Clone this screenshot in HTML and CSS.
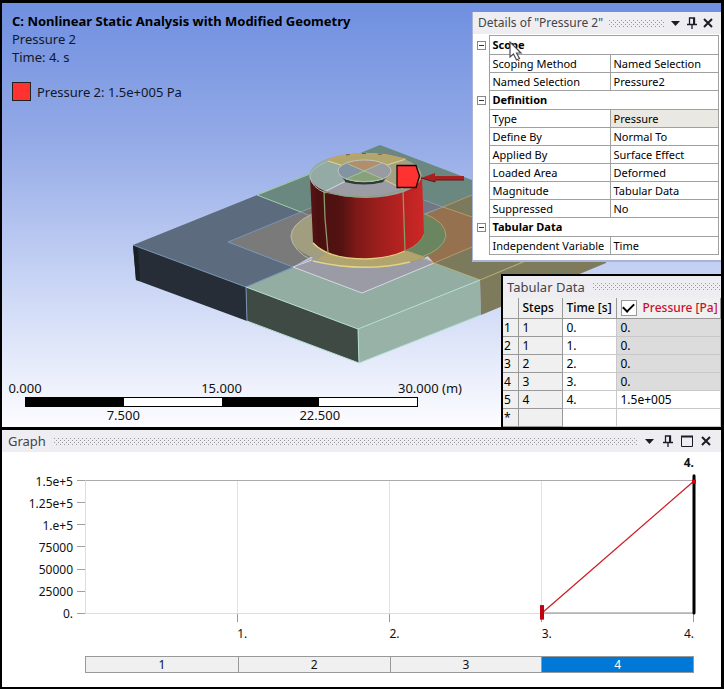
FILE: index.html
```html
<!DOCTYPE html>
<html lang="en">
<head>
<meta charset="utf-8">
<title>Nonlinear Static Analysis</title>
<link rel="stylesheet" href="styles.css">
</head>
<body>
<main class="app">
  <section class="viewport">
    <svg class="scene" viewBox="2 3 719 424" preserveAspectRatio="xMinYMin slice" aria-hidden="true">
      <defs>
        <linearGradient id="wall" x1="0" x2="1" y1="0" y2="0">
          <stop offset="0" stop-color="#5a1413"/><stop offset=".07" stop-color="#4a1010"/><stop offset=".28" stop-color="#551212"/>
          <stop offset=".4" stop-color="#7c1917"/><stop offset=".6" stop-color="#9c1f1d"/><stop offset=".8" stop-color="#b72220"/><stop offset="1" stop-color="#cc2827"/>
        </linearGradient>
        <clipPath id="ring"><ellipse cx="368.500" cy="236" rx="78" ry="31"/></clipPath>
        <clipPath id="top"><ellipse cx="365.500" cy="175.500" rx="56" ry="22.500"/></clipPath>
        <clipPath id="hub"><ellipse cx="364.500" cy="171" rx="26.500" ry="11"/></clipPath>
      </defs>
      <!-- plate: top face -->
      <path fill="#6b8880" d="M257 195 380 145 472 180 520 198 443 207 301 212Z"/>
      <path fill="#5c6c7e" d="M133 245 257 195 310 215 228 242 293 267 246 287Z"/>
      <path fill="#7b7a5c" d="M443 207 472 195 520 195 606 229 480 280 434 263Z"/>
      <path fill="#93ada3" d="M246 287 293 267 362 293 434 263 480 280 358 329Z"/>
      <path fill="#7b7a7b" d="M228 242 301 212 322 204 340 240 293 267Z"/>
      <path fill="#9b9ba6" d="M293 267 330 250 400 250 434 263 362 293Z"/>
      <path fill="#957150" d="M434 263 400 225 443 207 520 235 472 247Z"/>
      <path fill="#727783" d="M410 196 424 200 443 207 410 220Z"/>
      <path fill="#75736f" d="M301 212 322 204 322 219Z"/>
      <!-- plate: side faces -->
      <path fill="#262d36" d="M133 245 246 287 247 321 136 280Z"/>
      <path fill="#1a2126" d="M133 245 138 247 140 281 136 280Z"/>
      <path fill="#404a45" d="M246 287 358 329 359 363 247 321Z"/>
      <path fill="#98b2a8" d="M358 329 480 280 481 315 359 363Z"/>
      <path fill="#7e7b5d" d="M480 280 606 229 606 263 481 315Z"/>
      <!-- ring on the plate -->
      <g clip-path="url(#ring)">
        <path fill="#a19e80" d="M280 200H370V280H280Z"/>
        <path fill="#6a855f" d="M370 200H460V280H370Z"/>
        <path fill="#b1a46e" d="M300 268 328 253 405 250 440 262 420 280H300Z"/>
      </g>
      <g fill="none" stroke-width="1">
        <path stroke="#7793b4" d="M133 245 246 287 303 263M246 287 247 321M301 212 228 242 293 267"/>
        <path stroke="#9bd0a0" d="M257 195 301 212M257 195 310 174"/>
        <path stroke="#8b9ba5" d="M301 212 318 205M301 212 313 217M424 200 443 207 424 214"/>
        <path stroke="#b5e0d0" d="M246 287 358 329 480 280M358 329 359 363 247 321M359 363 481 315"/>
        <path stroke="#d5d6df" d="M293 267 362 293 434 263M293 267 312 260"/>
        <path stroke="#ba9868" d="M443 207 472 195M443 207 472 217M421 257 434 263 472 247"/>
        <path stroke="#b2ae70" d="M434 263 480 280 525 261"/>
        <path stroke="#b8b7a8" d="M312 214Q291 224 291 237 293 251 313 261"/>
        <path stroke="#e2d681" stroke-width="1.500" d="M313 261Q364 273 410 262"/>
        <path stroke="#b89b64" d="M425 214Q446 222 446 236 443 250 421 257M421 257 410 252"/>
      </g>
      <!-- cylinder -->
      <path fill="url(#wall)" d="M310 176 313 242Q328 259 366 259 410 258 424 235L422 176Z"/>
      <path fill="none" stroke="#e3d27f" stroke-width="1.300" d="M313 243Q328 259 366 259 390 258 405 251"/>
      <path fill="none" stroke="#79986a" d="M405 251Q421 244 424 234"/>
      <path fill="none" stroke="#8b9b69" stroke-width="1.300" d="M324 191 325 218 328 253M403 189 405 251"/>
      <g clip-path="url(#top)">
        <path fill="#9c9ca5" d="M300 150H430V200H300Z"/>
        <path fill="#94aaa5" d="M300 145 328 161 365 173 324 192 300 195Z"/>
        <path fill="#b1a66e" d="M328 161 310 145H420L406 159 365 173Z"/>
        <path fill="#a4a183" d="M406 159 430 150V195L403 189 365 173Z"/>
        <path fill="none" stroke="#e0d990" d="M328 161 347 167M406 159 384 166"/>
        <path fill="none" stroke="#d9dadd" d="M324 192 346 181"/>
        <path fill="none" stroke="#d5cf97" d="M403 189 383 179"/>
      </g>
      <path fill="none" stroke="#acbdb6" d="M310 178Q309 169 328 161M310 177Q312 188 326 193"/>
      <path fill="none" stroke="#d0a064" d="M328 160Q364 147 406 159"/>
      <path fill="none" stroke="#8ba174" d="M324 192Q364 203 403 190"/>
      <path stroke="#5c6455" stroke-dasharray="4 12" d="M346 155Q364 152 386 155" fill="none"/>
      <!-- raised hub -->
      <path fill="#39453f" d="M338 172 345 181Q364 186 383 182L391 171 383 176H345Z"/>
      <g clip-path="url(#hub)">
        <path fill="#999aa2" d="M330 155H395V185H330Z"/>
        <path fill="#8293a2" d="M335 155 348 164 364 171 346 179 335 185Z"/>
        <path fill="#b28e6c" d="M348 164 340 155H390L382 163 364 171Z"/>
        <path fill="#87a17b" d="M364 171 346 179 340 188H390L383 179Z"/>
      </g>
      <ellipse cx="364.500" cy="171" rx="26.500" ry="11" fill="none" stroke="#bdc7c4"/>
      <path fill="none" stroke="#2f3b34" stroke-width="2" d="M345 181Q364 186 383 181"/>
      <path fill="none" stroke="#a5c397" d="M348 164 383 179M382 163 346 179Q364 184 383 179"/>
      <!-- load tag and direction arrow -->
      <path fill="#a92020" d="M464 176V180H435V182L421 178 435 173V176Z"/>
      <path stroke="#641819" fill="none" d="M421 178 435 182V180H464"/>
      <path fill="#ff3232" stroke="#160505" stroke-width="1.300" d="M397 165.500H416L419.500 176 416 187.500H397Z"/>
    </svg>

    <div class="caption">
      <h1>C: Nonlinear Static Analysis with Modified Geometry</h1>
      <p>Pressure 2</p>
      <p>Time: 4. s</p>
      <p class="legend"><span class="swatch"></span>Pressure 2: 1.5e+005 Pa</p>
    </div>

    <div class="scale">
      <div class="scale-top"><span>0.000</span><span>15.000</span><span class="scale-end">30.000 (m)</span></div>
      <div class="scale-bar"><i></i><i></i><i></i><i></i></div>
      <div class="scale-bottom"><span>7.500</span><span>22.500</span></div>
    </div>

    <section class="details">
      <header class="bar">
        <h2>Details of "Pressure 2"</h2><span class="grip"></span>
        <button aria-label="Menu"><svg width="10" height="12" viewBox="0 0 10 12"><path d="M0 4H9L4.500 9Z" fill="#1c1c28"/></svg></button>
        <button aria-label="Pin"><svg width="10" height="12" viewBox="0 0 10 12"><path d="M2.500 7V1H7.500V7M0 7.500H10M5 8V12" fill="none" stroke="#1c1c28" stroke-width="1.300"/><path d="M6 1H8V7H6Z" fill="#1c1c28"/></svg></button>
        <button aria-label="Close"><svg width="10" height="12" viewBox="0 0 10 12"><path d="M1 2 9 10M9 2 1 10" stroke="#1c1c28" stroke-width="2"/></svg></button>
      </header>
      <table class="props">
        <colgroup><col class="c-gutter"><col class="c-name"><col></colgroup>
        <tr class="group"><td><button aria-label="Collapse Scope"></button></td><th colspan="2">Scope</th></tr>
        <tr><td></td><td>Scoping Method</td><td>Named Selection</td></tr>
        <tr><td></td><td>Named Selection</td><td>Pressure2</td></tr>
        <tr class="group"><td><button aria-label="Collapse Definition"></button></td><th colspan="2">Definition</th></tr>
        <tr><td></td><td>Type</td><td class="locked">Pressure</td></tr>
        <tr><td></td><td>Define By</td><td>Normal To</td></tr>
        <tr><td></td><td>Applied By</td><td>Surface Effect</td></tr>
        <tr><td></td><td>Loaded Area</td><td>Deformed</td></tr>
        <tr><td></td><td>Magnitude</td><td>Tabular Data</td></tr>
        <tr><td></td><td>Suppressed</td><td>No</td></tr>
        <tr class="group"><td><button aria-label="Collapse Tabular Data"></button></td><th colspan="2">Tabular Data</th></tr>
        <tr><td></td><td>Independent Variable</td><td>Time</td></tr>
      </table>
      <svg class="cursor" width="14" height="20" viewBox="0 0 14 20" aria-hidden="true"><path d="M1 1V16L4.500 13 7.500 19 10.500 17.500 7.500 12H12Z" fill="#fff" stroke="#4a4a55" stroke-width="1.200"/></svg>
    </section>

    <section class="tabular">
      <header class="bar"><h2>Tabular Data</h2><span class="grip"></span></header>
      <table class="data">
        <colgroup><col class="d-num"><col class="d-step"><col class="d-time"><col></colgroup>
        <tr><th></th><th>Steps</th><th>Time [s]</th><th class="series"><label><input type="checkbox" checked>Pressure [Pa]</label></th></tr>
        <tr><td>1</td><td>1</td><td>0.</td><td class="off">0.</td></tr>
        <tr><td>2</td><td>1</td><td>1.</td><td class="off">0.</td></tr>
        <tr><td>3</td><td>2</td><td>2.</td><td class="off">0.</td></tr>
        <tr><td>4</td><td>3</td><td>3.</td><td class="off">0.</td></tr>
        <tr><td>5</td><td>4</td><td>4.</td><td>1.5e+005</td></tr>
        <tr><td>*</td><td></td><td></td><td></td></tr>
      </table>
    </section>
  </section>

  <section class="graph">
    <header class="bar">
      <h2>Graph</h2><span class="grip"></span>
      <button aria-label="Menu"><svg width="10" height="12" viewBox="0 0 10 12"><path d="M0 4H9L4.500 9Z" fill="#1c1c28"/></svg></button>
      <button aria-label="Pin"><svg width="10" height="12" viewBox="0 0 10 12"><path d="M2.500 7V1H7.500V7M0 7.500H10M5 8V12" fill="none" stroke="#1c1c28" stroke-width="1.300"/><path d="M6 1H8V7H6Z" fill="#1c1c28"/></svg></button>
      <button aria-label="Maximize"><svg width="12" height="12" viewBox="0 0 12 12"><path d="M.5 1.500H11.500V11.500H.5Z" fill="none" stroke="#1c1c28"/><path d="M0 1.500H12" stroke="#1c1c28" stroke-width="2"/></svg></button>
      <button aria-label="Close"><svg width="10" height="12" viewBox="0 0 10 12"><path d="M1 2 9 10M9 2 1 10" stroke="#1c1c28" stroke-width="2"/></svg></button>
    </header>
    <div class="chart">
      <div class="now">4.</div>
      <div class="y-labels"><span>1.5e+5</span><span>1.25e+5</span><span>1.e+5</span><span>75000</span><span>50000</span><span>25000</span><span>0.</span></div>
      <div class="y-ticks"><i></i><i></i><i></i><i></i><i></i><i></i><i></i></div>
      <div class="plot">
        <i></i><i></i><i></i><i></i>
        <svg class="curve" viewBox="0 0 400 100" preserveAspectRatio="none" aria-hidden="true">
          <path d="M300 100H400" stroke="#8c8c8c" vector-effect="non-scaling-stroke"/>
          <path d="M300 100 400 0" stroke="#d01820" stroke-width="1.200" vector-effect="non-scaling-stroke"/>
          <path d="M300 94V105" stroke="#c00010" stroke-width="4" vector-effect="non-scaling-stroke"/>
          <path d="M400-4V100" stroke="#000" stroke-width="3" stroke-linecap="round" vector-effect="non-scaling-stroke"/>
          <path d="M400-1V2" stroke="#d00010" stroke-width="4" vector-effect="non-scaling-stroke"/>
        </svg>
      </div>
      <div class="x-labels"><span></span><span>1.</span><span>2.</span><span>3.<b>4.</b></span></div>
      <div class="steps"><button>1</button><button>2</button><button>3</button><button class="active">4</button></div>
    </div>
  </section>
</main>
</body>
</html>
```
FILE: styles.css
```css
* { box-sizing: border-box; }
body {
  margin: 0;
  font: 12px/18px "Noto Sans", "Open Sans", sans-serif;
  color: #111;
  background: #000;
}
h1, h2, p { margin: 0; font-size: inherit; }
button { border: 0; padding: 0; margin: 0; background: none; font: inherit; color: inherit; }
table { border-collapse: collapse; table-layout: fixed; width: 100%; }
td, th { padding: 0; text-align: left; font-weight: 400; white-space: nowrap; }

.app {
  min-height: 100vh;
  display: flex;
  flex-direction: column;
  border: 2px solid #000;
  border-width: 3px 3px 2px 2px;
}

/* 3D viewport */
.viewport {
  position: relative;
  flex: 1;
  min-height: 424px;
  background: linear-gradient(#6f8fe0, #95abe7 33%, #c9d5f5 66%, #fdfdff);
  overflow: hidden;
}
.scene { position: absolute; inset: 0; width: 100%; height: 100%; }
.caption { position: absolute; left: 10px; top: 9px; color: #101828; font-size: 13px; }
.caption h1 { font-weight: 700; color: #000; }
.legend { display: flex; align-items: center; gap: 6px; margin-top: 16px; }
.swatch { width: 19px; height: 19px; background: #ff3232; border: 1px solid #222; }

.scale { position: absolute; left: 23px; bottom: 3px; width: 393px; font-size: 13px; }
.scale-top, .scale-bottom { display: flex; line-height: 17px; }
.scale-top { justify-content: space-between; }
.scale-bottom { justify-content: space-around; }
.scale span { width: 0; display: flex; justify-content: center; white-space: nowrap; }
.scale .scale-end { justify-content: flex-start; text-indent: -20px; }
.scale-bar { display: grid; grid-template-columns: repeat(4, 1fr); height: 10px; border: 1px solid #000; background: #fff; }
.scale-bar i:nth-child(odd) { background: #000; }

/* Panel title bars */
.bar { display: flex; align-items: center; gap: 8px; height: 22px; padding: 0 10px 0 6px; background: #eeeef2; color: #444; }
.bar h2 { font-weight: 400; font-size: 13px; white-space: nowrap; }
.bar button { display: flex; }
.grip {
  flex: 1;
  height: 7px;
  background:
    conic-gradient(from 270deg at 1px 1px, #999 90deg, transparent 0) 0 0 / 4px 4px,
    conic-gradient(from 270deg at 1px 1px, #999 90deg, transparent 0) 2px 2px / 4px 4px;
}

/* Details panel */
.details { position: absolute; right: 0; top: 9px; width: 249px; padding: 0 2px 5px 0; background: #fff; border: 1px solid #a9b4d6; border-width: 0 0 2px 1px; color: #000; font-size: 11px; }
.details .bar { margin: 0 -2px 1px 0; padding: 0 8px 0 5px; gap: 6px; }
.details .bar h2 { font-size: 12px; }
.c-gutter { width: 16px; }
.c-name { width: 121px; }
.props tr { height: 18px; }
.props .group { height: 19px; }
.props td, .props th { border: 1px solid #a0a0a0; padding: 0 0 0 3px; line-height: 16px; }
.props td:first-child { border-width: 0; padding: 0 0 0 4px; }
.props th { font-weight: 700; }
.props .locked { background: #e9e8e3; }
.props button { display: block; width: 9px; height: 9px; border: 1px solid #888; background: linear-gradient(#333, #333) center / 5px 1px no-repeat; }
.cursor { position: absolute; left: 36px; top: 29px; }

/* Tabular data panel */
.tabular { position: absolute; right: 0; bottom: 0; width: 220px; background: #eee; border: 2px solid #000; border-width: 2px 0 0 2px; color: #000; }
.tabular .bar { padding: 0 0 0 4px; }
.d-num { width: 15px; }
.d-step { width: 44px; }
.d-time { width: 54px; }
.data tr { height: 18px; }
.data tr:first-child { height: 21px; }
.data td, .data th { border: 1px solid #999; border-left: 0; padding: 0 0 0 4px; background: #f0f0f0; line-height: 16px; }
.data td:first-child { padding-left: 1px; }
.data td:nth-child(3), .data td:nth-child(4) { background: #fff; border-color: #c8c8c8; }
.data .off:nth-child(4) { background: #dcdcdc; }
.data th { border-top: 0; font-weight: 500; }
.data .series { color: #c8102e; }
.series label { display: flex; align-items: center; gap: 6px; }
.series input { appearance: none; margin: 0; width: 16px; height: 16px; border: 1px solid #999; background: #fff; display: grid; place-items: center; }
.series input:checked::before { content: ""; width: 9px; height: 5px; border: solid #000; border-width: 0 0 2px 2px; transform: translateY(-1px) rotate(-45deg); }

/* Graph panel */
.graph { border-top: 3px solid #000; background: #fff; }
.chart {
  display: grid;
  grid-template-columns: 71px 12px 1fr;
  grid-template-rows: 17px 154px 20px auto;
  padding: 2px 27px 14px 0;
}
.now { grid-column: 3; justify-self: end; font-weight: 700; }
.y-labels { grid-column: 1; display: flex; flex-direction: column; text-align: right; line-height: 22px; }
.y-ticks { display: flex; flex-direction: column; justify-content: space-between; padding: 9px 0 11px 4px; }
.y-ticks i { height: 1px; background: #a0a0a0; }
.plot { position: relative; margin: 9px 0 11px; display: grid; grid-template-columns: repeat(4, 1fr); border: 1px solid #ddd; border-top-color: #aaa; border-right: 0; }
.plot i {
  margin-bottom: -9px;
  background:
    linear-gradient(#999, #999) right bottom / 1px 8px no-repeat,
    linear-gradient(#e2e2e2, #e2e2e2) right / 1px 100% no-repeat;
}
.curve { position: absolute; inset: 0; width: 100%; height: 100%; overflow: visible; }
.x-labels { display: grid; grid-template-columns: repeat(4, 1fr); grid-column: 3; }
.x-labels span { display: flex; justify-content: space-between; }
.x-labels b { font-weight: 400; }
.steps { grid-column: 3; display: grid; grid-template-columns: repeat(4, 1fr); margin-top: 11px; height: 17px; border: 1px solid #999; }
.steps button { background: #f0f0f0; line-height: 15px; }
.steps button + button { border-left: 1px solid #999; }
.steps .active { background: #0078d7; color: #fff; }
```
